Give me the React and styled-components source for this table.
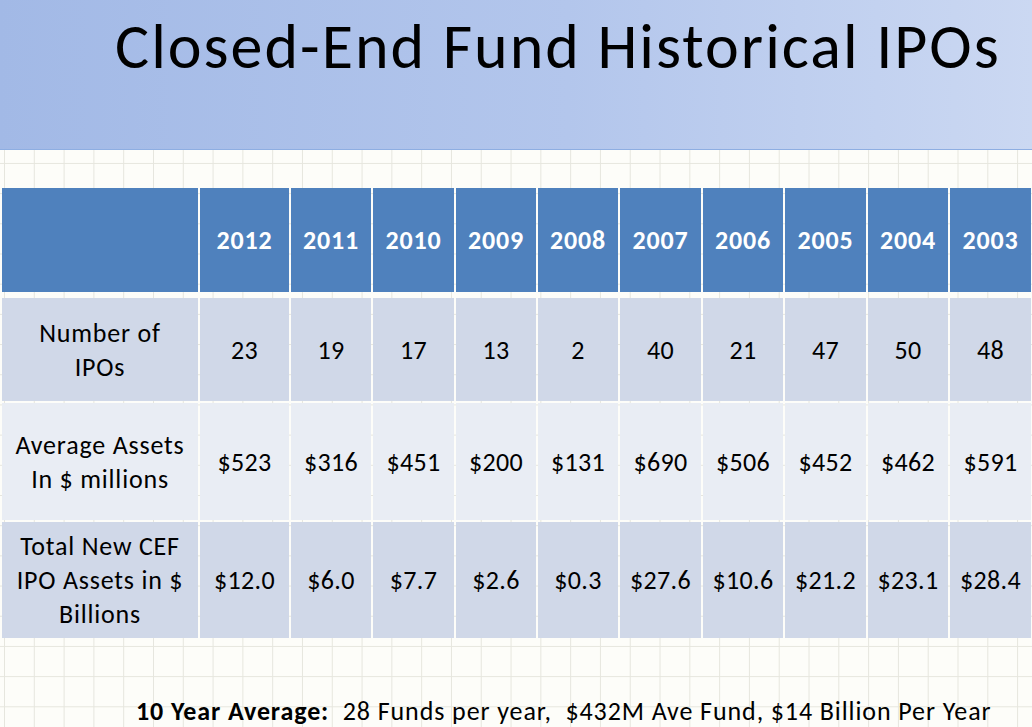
import styled, { createGlobalStyle } from "styled-components";

const GlobalStyle = createGlobalStyle`
  html, body {
    margin: 0;
    padding: 0;
  }
  body {
    font-family: Calibri, Carlito, Lato, "Open Sans", sans-serif;
    color: #000;
  }
`;

const Slide = styled.div`
  width: 1032px;
  height: 727px;
  overflow: hidden;
  background-color: #fdfdf9;
  background-image:
    linear-gradient(to right, #e6e6de 1px, transparent 1px),
    linear-gradient(to bottom, #e6e6de 1px, transparent 1px);
  background-size: 29.8px 30.2px;
  background-position: 4px 12px;
`;

const Banner = styled.header`
  height: 150px;
  border-bottom: 1px solid #8eaee2;
  background: linear-gradient(to right, #a2b9e6 0%, #b3c6ec 55%, #cbd8f2 100%);
  padding-left: 115px;
  box-sizing: border-box;
`;

const Title = styled.h1`
  margin: 0;
  padding-top: 11px;
  font-weight: 400;
  font-size: 64px;
  line-height: 70px;
  letter-spacing: 2px;
  white-space: nowrap;
`;

const Table = styled.div`
  margin: 38px 0 0 2px;
  display: flex;
  flex-direction: column;
  gap: 2px;
`;

const Row = styled.div`
  display: grid;
  grid-template-columns: 196px 89px 80px 81px 80px 80px 81px 80px 81px 80px 81px;
  column-gap: 2px;
  height: ${(p) => p.$h}px;
  margin-bottom: ${(p) => (p.$header ? 4 : 0)}px;
`;

const Cell = styled.div`
  display: flex;
  align-items: center;
  justify-content: center;
  text-align: center;
  background: ${(p) => (p.$header ? "#4f81bd" : p.$alt ? "#e9edf4" : "#d0d8e8")};
  color: ${(p) => (p.$header ? "#fff" : "#000")};
  font-weight: ${(p) => (p.$header ? 700 : 400)};
  font-size: 26px;
  letter-spacing: ${(p) => (p.$value ? 0.3 : 0.8)}px;
  line-height: 34px;
  white-space: pre-line;
`;

const Footer = styled.p`
  margin: 58px 0 0 136px;
  font-size: 26px;
  letter-spacing: 0.9px;
  line-height: 30px;
  white-space: pre;
`;

const years = ["2012", "2011", "2010", "2009", "2008", "2007", "2006", "2005", "2004", "2003"];

const rows = [
  {
    label: "Number of\nIPOs",
    h: 103,
    values: ["23", "19", "17", "13", "2", "40", "21", "47", "50", "48"],
  },
  {
    label: "Average Assets\nIn $ millions",
    h: 117,
    alt: true,
    values: ["$523", "$316", "$451", "$200", "$131", "$690", "$506", "$452", "$462", "$591"],
  },
  {
    label: "Total New CEF\nIPO Assets in $\nBillions",
    h: 116,
    values: ["$12.0", "$6.0", "$7.7", "$2.6", "$0.3", "$27.6", "$10.6", "$21.2", "$23.1", "$28.4"],
  },
];

export default function App() {
  return (
    <Slide>
      <GlobalStyle />
      <Banner>
        <Title>Closed-End Fund Historical IPOs</Title>
      </Banner>
      <Table>
        <Row $h={104} $header>
          <Cell $header />
          {years.map((y) => (
            <Cell $header key={y}>
              {y}
            </Cell>
          ))}
        </Row>
        {rows.map((r) => (
          <Row $h={r.h} key={r.label}>
            <Cell $alt={r.alt}>{r.label}</Cell>
            {r.values.map((v, i) => (
              <Cell $alt={r.alt} $value key={i}>
                {v}
              </Cell>
            ))}
          </Row>
        ))}
      </Table>
      <Footer>
        <b>10 Year Average:</b>
        {"  28 Funds per year,  $432M Ave Fund, $14 Billion Per Year"}
      </Footer>
    </Slide>
  );
}
